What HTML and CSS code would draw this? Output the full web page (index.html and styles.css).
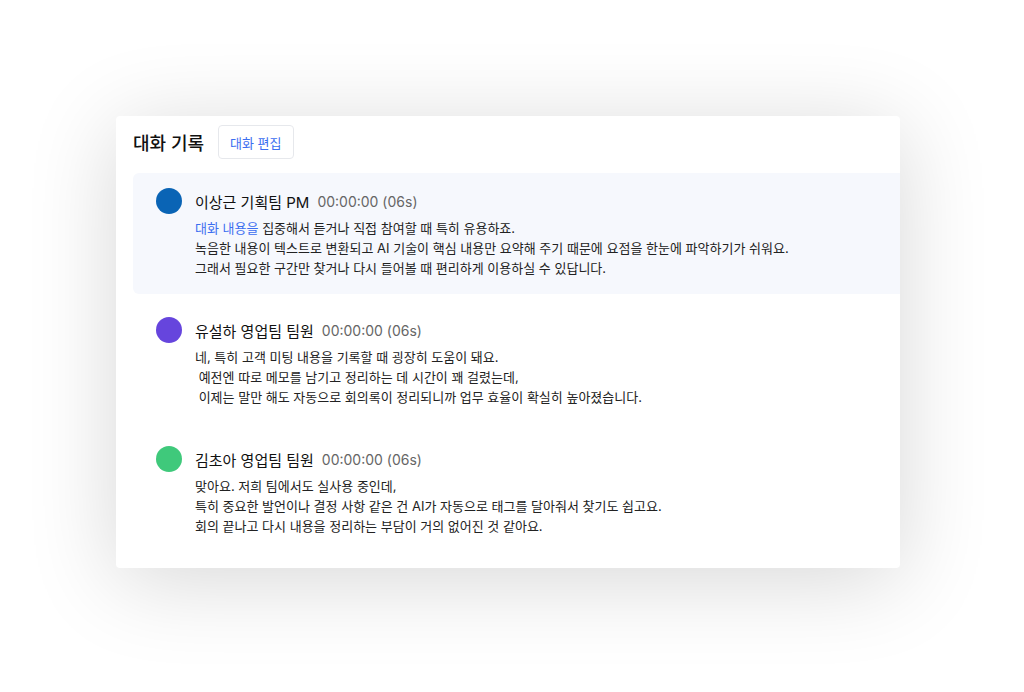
FILE: index.html
```html
<!DOCTYPE html>
<html lang="ko">
<head>
    <meta charset="UTF-8">
    <meta name="viewport" content="width=device-width, initial-scale=1.0">
    <title>대화 기록</title>
    <link rel="stylesheet" href="styles.css">
</head>
<body>
    <div class="card">
        <div class="card-header">
            <h2>대화 기록</h2>
            <button class="edit-btn">대화 편집</button>
        </div>

        <div class="messages">
            <div class="message active">
                <span class="avatar blue"></span>
                <div class="message-body">
                    <div class="meta">
                        <span class="name">이상근 기획팀 PM</span>
                        <span class="time">00:00:00 (06s)</span>
                    </div>
                    <p class="text"><span class="highlight">대화 내용을</span> 집중해서 듣거나 직접 참여할 때 특히 유용하죠.<br>녹음한 내용이 텍스트로 변환되고 AI 기술이 핵심 내용만 요약해 주기 때문에 요점을 한눈에 파악하기가 쉬워요.<br>그래서 필요한 구간만 찾거나 다시 들어볼 때 편리하게 이용하실 수 있답니다.</p>
                </div>
            </div>

            <div class="message">
                <span class="avatar purple"></span>
                <div class="message-body">
                    <div class="meta">
                        <span class="name">유설하 영업팀 팀원</span>
                        <span class="time">00:00:00 (06s)</span>
                    </div>
                    <p class="text">네, 특히 고객 미팅 내용을 기록할 때 굉장히 도움이 돼요.<br>&nbsp;예전엔 따로 메모를 남기고 정리하는 데 시간이 꽤 걸렸는데,<br>&nbsp;이제는 말만 해도 자동으로 회의록이 정리되니까 업무 효율이 확실히 높아졌습니다.</p>
                </div>
            </div>

            <div class="message">
                <span class="avatar green"></span>
                <div class="message-body">
                    <div class="meta">
                        <span class="name">김초아 영업팀 팀원</span>
                        <span class="time">00:00:00 (06s)</span>
                    </div>
                    <p class="text">맞아요. 저희 팀에서도 실사용 중인데,<br>특히 중요한 발언이나 결정 사항 같은 건 AI가 자동으로 태그를 달아줘서 찾기도 쉽고요.<br>회의 끝나고 다시 내용을 정리하는 부담이 거의 없어진 것 같아요.</p>
                </div>
            </div>
        </div>
    </div>
</body>
</html>
```

FILE: styles.css
```css
* {
    margin: 0;
    padding: 0;
    box-sizing: border-box;
}

body {
    width: 1024px;
    height: 692px;
    padding: 116px 124px 124px 116px;
    background: #ffffff;
    font-family: 'Inter', 'Noto Sans CJK KR', sans-serif;
    color: #1f1f1f;
    overflow: hidden;
}

.card {
    width: 784px;
    height: 452px;
    background: #ffffff;
    border-radius: 4px;
    padding: 9px 0 16px 17px;
    box-shadow: 0 12px 90px rgba(0, 0, 0, 0.16);
    overflow: hidden;
}

.card-header {
    display: flex;
    align-items: center;
    gap: 14px;
    height: 34px;
}

.card-header h2 {
    font-size: 18px;
    font-weight: 500;
    color: #111;
}

.edit-btn {
    height: 34px;
    padding: 0 11px;
    border: 1px solid #e6e8ec;
    border-radius: 4px;
    background: #fff;
    color: #3c6ef0;
    font-family: inherit;
    font-size: 13px;
}

.messages {
    display: flex;
    flex-direction: column;
    gap: 8px;
    margin-top: 14px;
}

.message {
    display: flex;
    gap: 13px;
    height: 121px;
    padding: 15px 0 0 23px;
    border-radius: 6px 0 0 6px;
}

.message.active {
    background: #f6f8fd;
}

.avatar {
    flex: none;
    width: 26px;
    height: 26px;
    border-radius: 50%;
}

.avatar.blue { background: #0a64b5; }
.avatar.purple { background: #6645dd; }
.avatar.green { background: #3fc97b; }

.meta {
    display: flex;
    align-items: center;
    gap: 8px;
    height: 26px;
}

.name {
    font-size: 15px;
    font-weight: 400;
    color: #111;
}

.time {
    font-size: 14px;
    color: #666;
}

.text {
    margin-top: 4px;
    font-size: 13px;
    line-height: 20px;
    color: #222;
}

.highlight {
    color: #3c6ef0;
}
```
